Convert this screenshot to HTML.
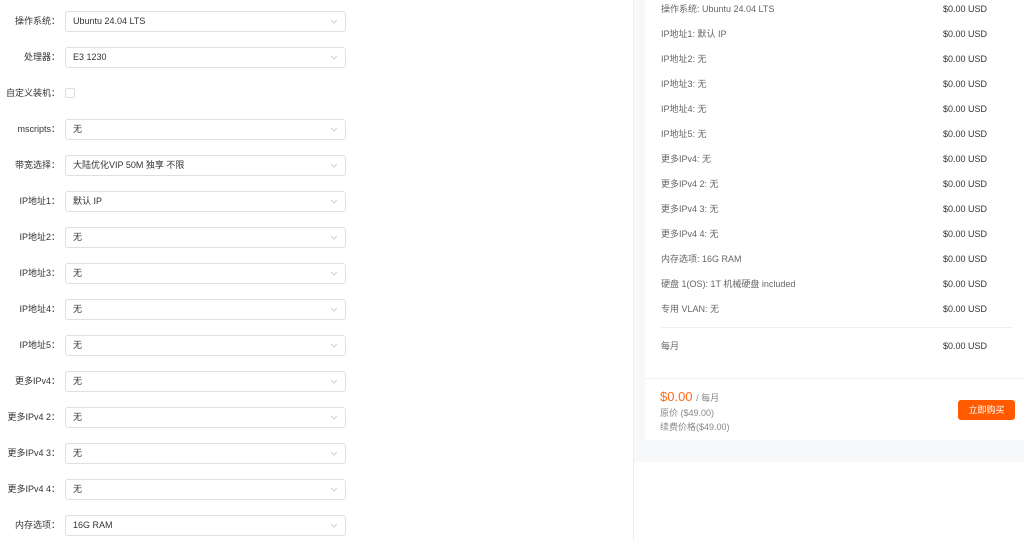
<!DOCTYPE html>
<html><head><meta charset="utf-8"><style>
*{margin:0;padding:0;box-sizing:border-box}
body{width:1024px;height:541px;overflow:hidden;background:#fff;font-family:"Liberation Sans","Noto Sans CJK SC",sans-serif;font-size:9px;color:#333;position:relative}
.row{position:absolute;left:0;height:21px;width:350px}
.lab{position:absolute;right:290px;top:0;line-height:21px;text-align:right;white-space:nowrap;color:#333}
.sel{position:absolute;left:65px;top:0;width:281px;height:21px;border:1px solid #dcdfe6;border-radius:3px;line-height:19px;padding-left:7px;color:#333}
.sel svg{position:absolute;right:7px;top:7px}
.cb{position:absolute;left:65px;top:5px;width:10px;height:10px;border:1px solid #dcdfe6;border-radius:2px}
.vline{position:absolute;left:633px;top:0;width:1px;height:541px;background:#eceef2}
.gray{position:absolute;left:634px;top:0;width:390px;height:462px;background:#f7f8fa}
.card{position:absolute;left:645px;top:0;width:379px;height:440px;background:#fff}
.it{position:absolute;left:661px;width:360px;color:#666;line-height:12px}
.it span{position:absolute;left:282px;color:#333}
.hr{position:absolute;left:661px;width:352px;height:1px;background:#eef0f3}
</style></head><body>
<div class="row" style="top:11px"><div class="lab">操作系统：</div><div class="sel">Ubuntu 24.04 LTS<svg width="8" height="5"><path d="M1 1L4 4L7 1" fill="none" stroke="#c0c4cc" stroke-width="0.8"/></svg></div></div>
<div class="row" style="top:47px"><div class="lab">处理器：</div><div class="sel">E3 1230<svg width="8" height="5"><path d="M1 1L4 4L7 1" fill="none" stroke="#c0c4cc" stroke-width="0.8"/></svg></div></div>
<div class="row" style="top:83px"><div class="lab">自定义装机：</div><div class="cb"></div></div>
<div class="row" style="top:119px"><div class="lab">mscripts：</div><div class="sel">无<svg width="8" height="5"><path d="M1 1L4 4L7 1" fill="none" stroke="#c0c4cc" stroke-width="0.8"/></svg></div></div>
<div class="row" style="top:155px"><div class="lab">带宽选择：</div><div class="sel">大陆优化VIP 50M 独享 不限<svg width="8" height="5"><path d="M1 1L4 4L7 1" fill="none" stroke="#c0c4cc" stroke-width="0.8"/></svg></div></div>
<div class="row" style="top:191px"><div class="lab">IP地址1：</div><div class="sel">默认 IP<svg width="8" height="5"><path d="M1 1L4 4L7 1" fill="none" stroke="#c0c4cc" stroke-width="0.8"/></svg></div></div>
<div class="row" style="top:227px"><div class="lab">IP地址2：</div><div class="sel">无<svg width="8" height="5"><path d="M1 1L4 4L7 1" fill="none" stroke="#c0c4cc" stroke-width="0.8"/></svg></div></div>
<div class="row" style="top:263px"><div class="lab">IP地址3：</div><div class="sel">无<svg width="8" height="5"><path d="M1 1L4 4L7 1" fill="none" stroke="#c0c4cc" stroke-width="0.8"/></svg></div></div>
<div class="row" style="top:299px"><div class="lab">IP地址4：</div><div class="sel">无<svg width="8" height="5"><path d="M1 1L4 4L7 1" fill="none" stroke="#c0c4cc" stroke-width="0.8"/></svg></div></div>
<div class="row" style="top:335px"><div class="lab">IP地址5：</div><div class="sel">无<svg width="8" height="5"><path d="M1 1L4 4L7 1" fill="none" stroke="#c0c4cc" stroke-width="0.8"/></svg></div></div>
<div class="row" style="top:371px"><div class="lab">更多IPv4：</div><div class="sel">无<svg width="8" height="5"><path d="M1 1L4 4L7 1" fill="none" stroke="#c0c4cc" stroke-width="0.8"/></svg></div></div>
<div class="row" style="top:407px"><div class="lab">更多IPv4 2：</div><div class="sel">无<svg width="8" height="5"><path d="M1 1L4 4L7 1" fill="none" stroke="#c0c4cc" stroke-width="0.8"/></svg></div></div>
<div class="row" style="top:443px"><div class="lab">更多IPv4 3：</div><div class="sel">无<svg width="8" height="5"><path d="M1 1L4 4L7 1" fill="none" stroke="#c0c4cc" stroke-width="0.8"/></svg></div></div>
<div class="row" style="top:479px"><div class="lab">更多IPv4 4：</div><div class="sel">无<svg width="8" height="5"><path d="M1 1L4 4L7 1" fill="none" stroke="#c0c4cc" stroke-width="0.8"/></svg></div></div>
<div class="row" style="top:515px"><div class="lab">内存选项：</div><div class="sel">16G RAM<svg width="8" height="5"><path d="M1 1L4 4L7 1" fill="none" stroke="#c0c4cc" stroke-width="0.8"/></svg></div></div>

<div class="vline"></div>
<div class="gray"></div>
<div class="card"></div>
<div class="it" style="top:3px">操作系统: Ubuntu 24.04 LTS<span>$0.00 USD</span></div>
<div class="it" style="top:28px">IP地址1: 默认 IP<span>$0.00 USD</span></div>
<div class="it" style="top:53px">IP地址2: 无<span>$0.00 USD</span></div>
<div class="it" style="top:78px">IP地址3: 无<span>$0.00 USD</span></div>
<div class="it" style="top:103px">IP地址4: 无<span>$0.00 USD</span></div>
<div class="it" style="top:128px">IP地址5: 无<span>$0.00 USD</span></div>
<div class="it" style="top:153px">更多IPv4: 无<span>$0.00 USD</span></div>
<div class="it" style="top:178px">更多IPv4 2: 无<span>$0.00 USD</span></div>
<div class="it" style="top:203px">更多IPv4 3: 无<span>$0.00 USD</span></div>
<div class="it" style="top:228px">更多IPv4 4: 无<span>$0.00 USD</span></div>
<div class="it" style="top:253px">内存选项: 16G RAM<span>$0.00 USD</span></div>
<div class="it" style="top:278px">硬盘 1(OS): 1T 机械硬盘 included<span>$0.00 USD</span></div>
<div class="it" style="top:303px">专用 VLAN: 无<span>$0.00 USD</span></div>
<div class="hr" style="top:327px"></div>
<div class="it" style="top:340px">每月<span>$0.00 USD</span></div>
<div class="hr" style="top:378px;left:645px;width:379px"></div>
<div style="position:absolute;left:660px;top:390px;color:#ff6a1a;font-size:13px;line-height:14px">$0.00 <span style="font-size:9px;color:#888">/ 每月</span></div>
<div style="position:absolute;left:660px;top:407px;color:#888;line-height:12px">原价 ($49.00)</div>
<div style="position:absolute;left:660px;top:421px;color:#888;line-height:12px">续费价格($49.00)</div>
<div style="position:absolute;left:958px;top:400px;width:57px;height:20px;background:#ff5a00;border-radius:3px;color:#fff;text-align:center;line-height:20px">立即购买</div>
</body></html>
